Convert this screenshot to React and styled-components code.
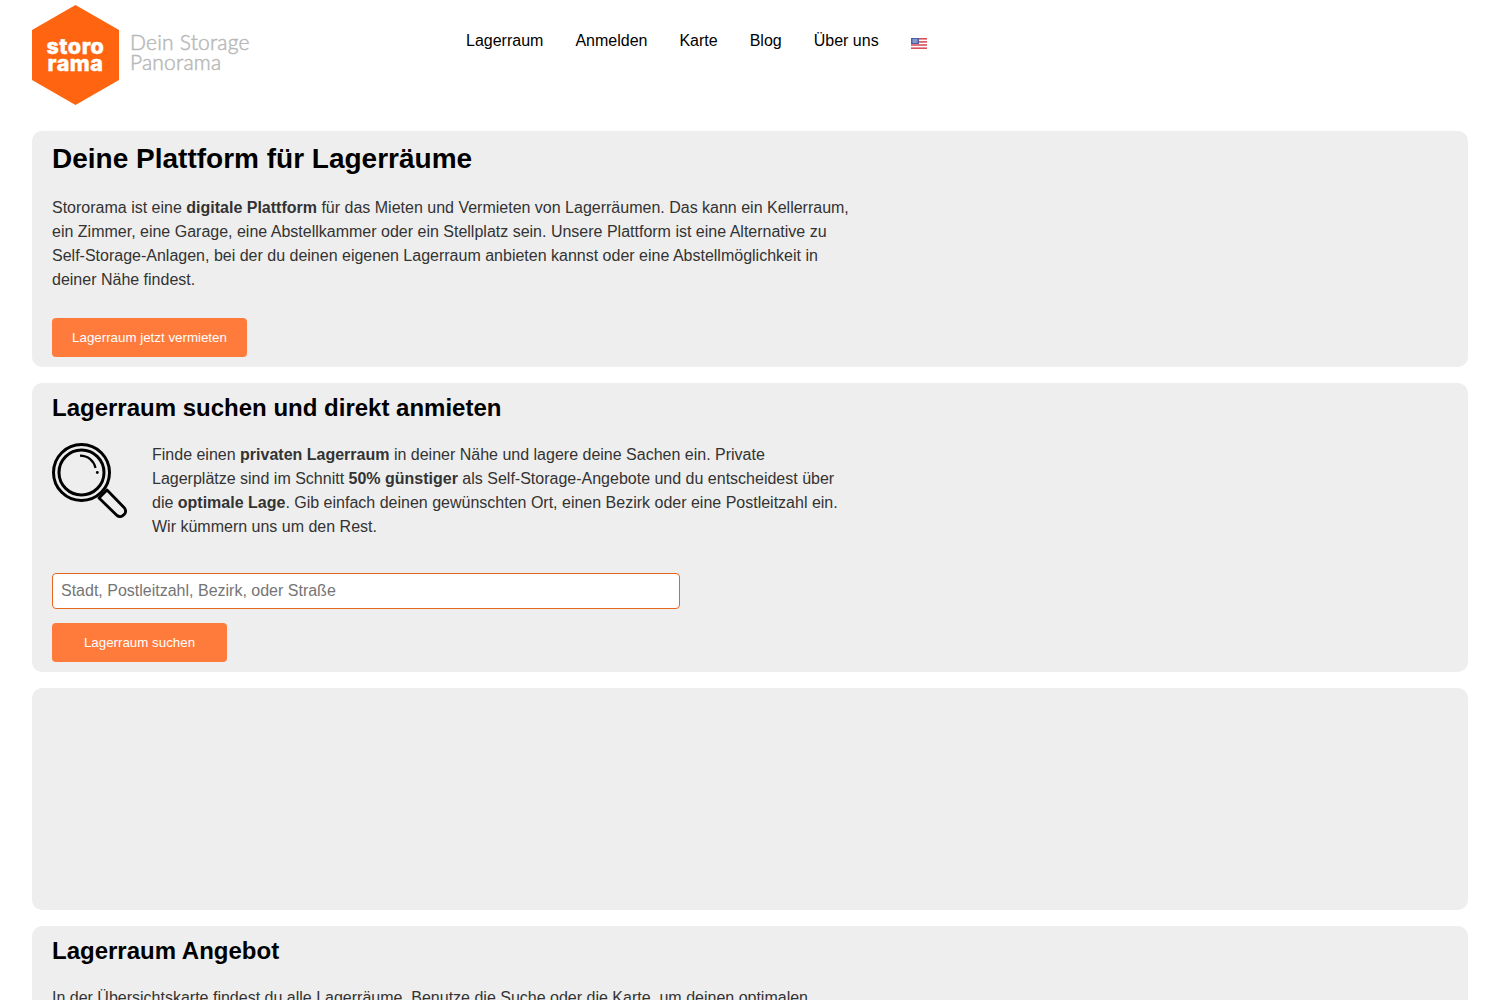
import React from 'react';
import styled, { createGlobalStyle } from 'styled-components';

const GlobalStyle = createGlobalStyle`
  html, body {
    margin: 0;
    height: 1000px;
    overflow: hidden;
    background: #fff;
    font-family: 'Liberation Sans', Arial, sans-serif;
  }
  * { box-sizing: border-box; }
`;

const Page = styled.div`
  padding: 0 32px;
  display: flex;
  flex-direction: column;
  gap: 16px;
`;

const Header = styled.header`
  display: flex;
  align-items: flex-start;
  height: 115px;
`;

const LogoWrap = styled.a`
  display: flex;
  align-items: center;
  width: 434px;
  padding-top: 5px;
  text-decoration: none;
`;

const Tagline = styled.div`
  margin: -6px 0 0 11px;
  font-family: 'Lato', sans-serif;
  font-weight: 300;
  font-size: 21px;
  line-height: 20px;
  letter-spacing: 0.2px;
  color: #b9b9b9;
  -webkit-text-stroke: 0.5px #b9b9b9;
`;

const Nav = styled.nav`
  display: flex;
  align-items: center;
  gap: 32px;
  height: 82px;
`;

const NavLink = styled.a`
  color: #000;
  font-size: 16px;
  text-decoration: none;
`;

const FlagIcon = styled.svg`
  margin-top: 5px;
`;

const Card = styled.section`
  background: #eee;
  border-radius: 10px;
  padding: 10px 20px;
  height: ${(p) => p.$height || 'auto'};
`;

const Title = styled.h1`
  margin: 0 0 20px;
  font-size: 28px;
  line-height: 35px;
  color: #000;
`;

const SubTitle = styled.h2`
  margin: 0 0 20px;
  font-size: 24px;
  line-height: 30px;
  color: #000;
`;

const Text = styled.p`
  margin: 0;
  max-width: 800px;
  font-size: 16px;
  line-height: 24px;
  color: #333;
`;

const Button = styled.button`
  display: block;
  height: 39px;
  width: ${(p) => p.$width};
  border: 0;
  border-radius: 4px;
  background: #ff7b3c;
  color: #fff;
  font-family: inherit;
  font-size: 13.33px;
  margin-top: ${(p) => p.$top || '0'};
`;

const Intro = styled.div`
  display: flex;
  gap: 25px;
  height: 130px;
`;

const IntroText = styled(Text)`
  width: 690px;
`;

const SearchGlyph = styled.svg`
  flex: none;
`;

const SearchInput = styled.input`
  display: block;
  width: 628px;
  height: 36px;
  padding: 0 8px;
  border: 1px solid #e8661c;
  border-radius: 4px;
  background: #fff;
  font-family: inherit;
  font-size: 16px;

  &::placeholder {
    color: #757575;
    opacity: 1;
  }
`;

const Logo = () => (
  <svg width="87" height="100" viewBox="0 0 87 100">
    <polygon points="43.5,0 87,25 87,75 43.5,100 0,75 0,25" fill="#ff6511" />
    <text x="43.5" y="49" textAnchor="middle" fontFamily="Inter, sans-serif" fontWeight="800" fontSize="21.5" letterSpacing="0.5" fill="#fff" stroke="#fff" strokeWidth="0.4">storo</text>
    <text x="43.5" y="66" textAnchor="middle" fontFamily="Inter, sans-serif" fontWeight="800" fontSize="21.5" letterSpacing="0.5" fill="#fff" stroke="#fff" strokeWidth="0.4">rama</text>
  </svg>
);

const Flag = () => (
  <FlagIcon width="16" height="11" viewBox="0 0 16 11">
    <rect width="16" height="11" fill="#fff" />
    <rect y="0" width="16" height="1.6" fill="#d8505a" />
    <rect y="3.1" width="16" height="1.6" fill="#d8505a" />
    <rect y="6.2" width="16" height="1.6" fill="#d8505a" />
    <rect y="9.4" width="16" height="1.6" fill="#d8505a" />
    <rect width="8" height="6" fill="#4a5fa5" />
    <rect x="1.5" y="1.5" width="5" height="1" fill="#c9d2ea" />
    <rect x="1.5" y="3.5" width="5" height="1" fill="#c9d2ea" />
  </FlagIcon>
);

const SearchIcon = () => (
  <SearchGlyph width="75" height="75" viewBox="0 0 75 75" fill="none" stroke="#000">
    <circle cx="29.5" cy="29.5" r="28" strokeWidth="3" />
    <circle cx="29.5" cy="29.5" r="22.5" strokeWidth="3" />
    <path d="M28 12.7 C36 12.7 42 18 43.5 25" strokeWidth="2.2" />
    <circle cx="45.3" cy="29.5" r="1.4" fill="#000" stroke="none" />
    <path d="M47 55 L55 47 L72.5 65 A5.4 5.4 0 0 1 65 72.5 Z" strokeWidth="2.8" strokeLinejoin="round" />
  </SearchGlyph>
);

export default function App() {
  return (
    <>
      <GlobalStyle />
      <Page>
        <Header>
          <LogoWrap href="#">
            <Logo />
            <Tagline>Dein Storage<br />Panorama</Tagline>
          </LogoWrap>
          <Nav>
            <NavLink href="#">Lagerraum</NavLink>
            <NavLink href="#">Anmelden</NavLink>
            <NavLink href="#">Karte</NavLink>
            <NavLink href="#">Blog</NavLink>
            <NavLink href="#">Über uns</NavLink>
            <Flag />
          </Nav>
        </Header>

        <Card $height="236px">
          <Title>Deine Plattform für Lagerräume</Title>
          <Text>
            Stororama ist eine <b>digitale Plattform</b> für das Mieten und Vermieten von Lagerräumen. Das kann ein Kellerraum, ein Zimmer, eine Garage, eine Abstellkammer oder ein Stellplatz sein. Unsere Plattform ist eine Alternative zu Self-Storage-Anlagen, bei der du deinen eigenen Lagerraum anbieten kannst oder eine Abstellmöglichkeit in deiner Nähe findest.
          </Text>
          <Button $width="195px" $top="26px">Lagerraum jetzt vermieten</Button>
        </Card>

        <Card $height="289px">
          <SubTitle>Lagerraum suchen und direkt anmieten</SubTitle>
          <Intro>
            <SearchIcon />
            <IntroText>
              Finde einen <b>privaten Lagerraum</b> in deiner Nähe und lagere deine Sachen ein. Private Lagerplätze sind im Schnitt <b>50% günstiger</b> als Self-Storage-Angebote und du entscheidest über die <b>optimale Lage</b>. Gib einfach deinen gewünschten Ort, einen Bezirk oder eine Postleitzahl ein. Wir kümmern uns um den Rest.
            </IntroText>
          </Intro>
          <SearchInput placeholder="Stadt, Postleitzahl, Bezirk, oder Straße" />
          <Button $width="175px" $top="14px">Lagerraum suchen</Button>
        </Card>

        <Card $height="222px" />

        <Card>
          <SubTitle>Lagerraum Angebot</SubTitle>
          <Text>
            In der Übersichtskarte findest du alle Lagerräume. Benutze die Suche oder die Karte, um deinen optimalen Lagerraum zu finden.
          </Text>
        </Card>
      </Page>
    </>
  );
}
